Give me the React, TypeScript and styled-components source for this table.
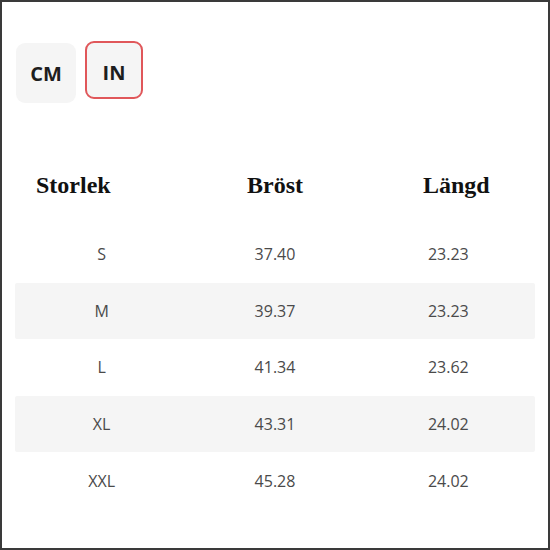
import React from "react";
import styled, { createGlobalStyle } from "styled-components";

const Global = createGlobalStyle`
  html, body { margin: 0; padding: 0; background: #fff; }
  * { box-sizing: border-box; }
`;

const Frame = styled.div`
  width: 550px;
  height: 550px;
  border: 2px solid #3a3a3a;
  background: #fff;
  overflow: hidden;
`;

const Toolbar = styled.div`
  display: flex;
  align-items: flex-start;
  gap: 9px;
  padding: 38px 0 0 14px;
`;

const UnitButton = styled.button<{ $active?: boolean }>`
  width: ${(p) => (p.$active ? 58 : 60)}px;
  height: ${(p) => (p.$active ? 58 : 60)}px;
  margin-top: ${(p) => (p.$active ? 1 : 3)}px;
  border-radius: 9px;
  border: ${(p) => (p.$active ? "2px solid #e0575a" : "none")};
  background: #f5f5f5;
  font-family: "Open Sans", sans-serif;
  font-weight: 700;
  font-size: 20px;
  line-height: 1;
  color: #1e1e1e;
  display: flex;
  align-items: center;
  justify-content: center;
  padding: ${(p) => (p.$active ? "6px 0 0 0" : "2px 0 0 0")};
`;

const Table = styled.div`
  margin: 54px 0 0 13px;
  width: 520px;
`;

const HeaderRow = styled.div`
  display: grid;
  grid-template-columns: repeat(3, 1fr);
  height: 56px;
  align-items: center;
  margin-bottom: 13px;
`;

const HeadCell = styled.div<{ $align: "left" | "center"; $pad?: number }>`
  font-family: "Liberation Serif", "Times New Roman", serif;
  font-weight: 700;
  font-size: 24px;
  color: #111;
  text-align: ${(p) => p.$align};
  padding-left: ${(p) => p.$pad ?? 0}px;
`;

const Row = styled.div<{ $striped?: boolean }>`
  display: grid;
  grid-template-columns: repeat(3, 1fr);
  height: 56.6px;
  align-items: center;
  background: ${(p) => (p.$striped ? "#f5f5f5" : "transparent")};
  border-radius: 2px;
`;

const Cell = styled.div`
  font-family: "Open Sans", sans-serif;
  font-size: 16px;
  color: #4a4a4a;
  text-align: center;
`;

const rows = [
  ["S", "37.40", "23.23"],
  ["M", "39.37", "23.23"],
  ["L", "41.34", "23.62"],
  ["XL", "43.31", "24.02"],
  ["XXL", "45.28", "24.02"],
];

export default function App() {
  return (
    <>
      <Global />
      <Frame>
        <Toolbar>
          <UnitButton>CM</UnitButton>
          <UnitButton $active>IN</UnitButton>
        </Toolbar>
        <Table>
          <HeaderRow>
            <HeadCell $align="left" $pad={21}>Storlek</HeadCell>
            <HeadCell $align="center">Bröst</HeadCell>
            <HeadCell $align="center" $pad={16}>Längd</HeadCell>
          </HeaderRow>
          {rows.map((r, i) => (
            <Row key={r[0]} $striped={i % 2 === 1}>
              {r.map((c, j) => (
                <Cell key={j}>{c}</Cell>
              ))}
            </Row>
          ))}
        </Table>
      </Frame>
    </>
  );
}
